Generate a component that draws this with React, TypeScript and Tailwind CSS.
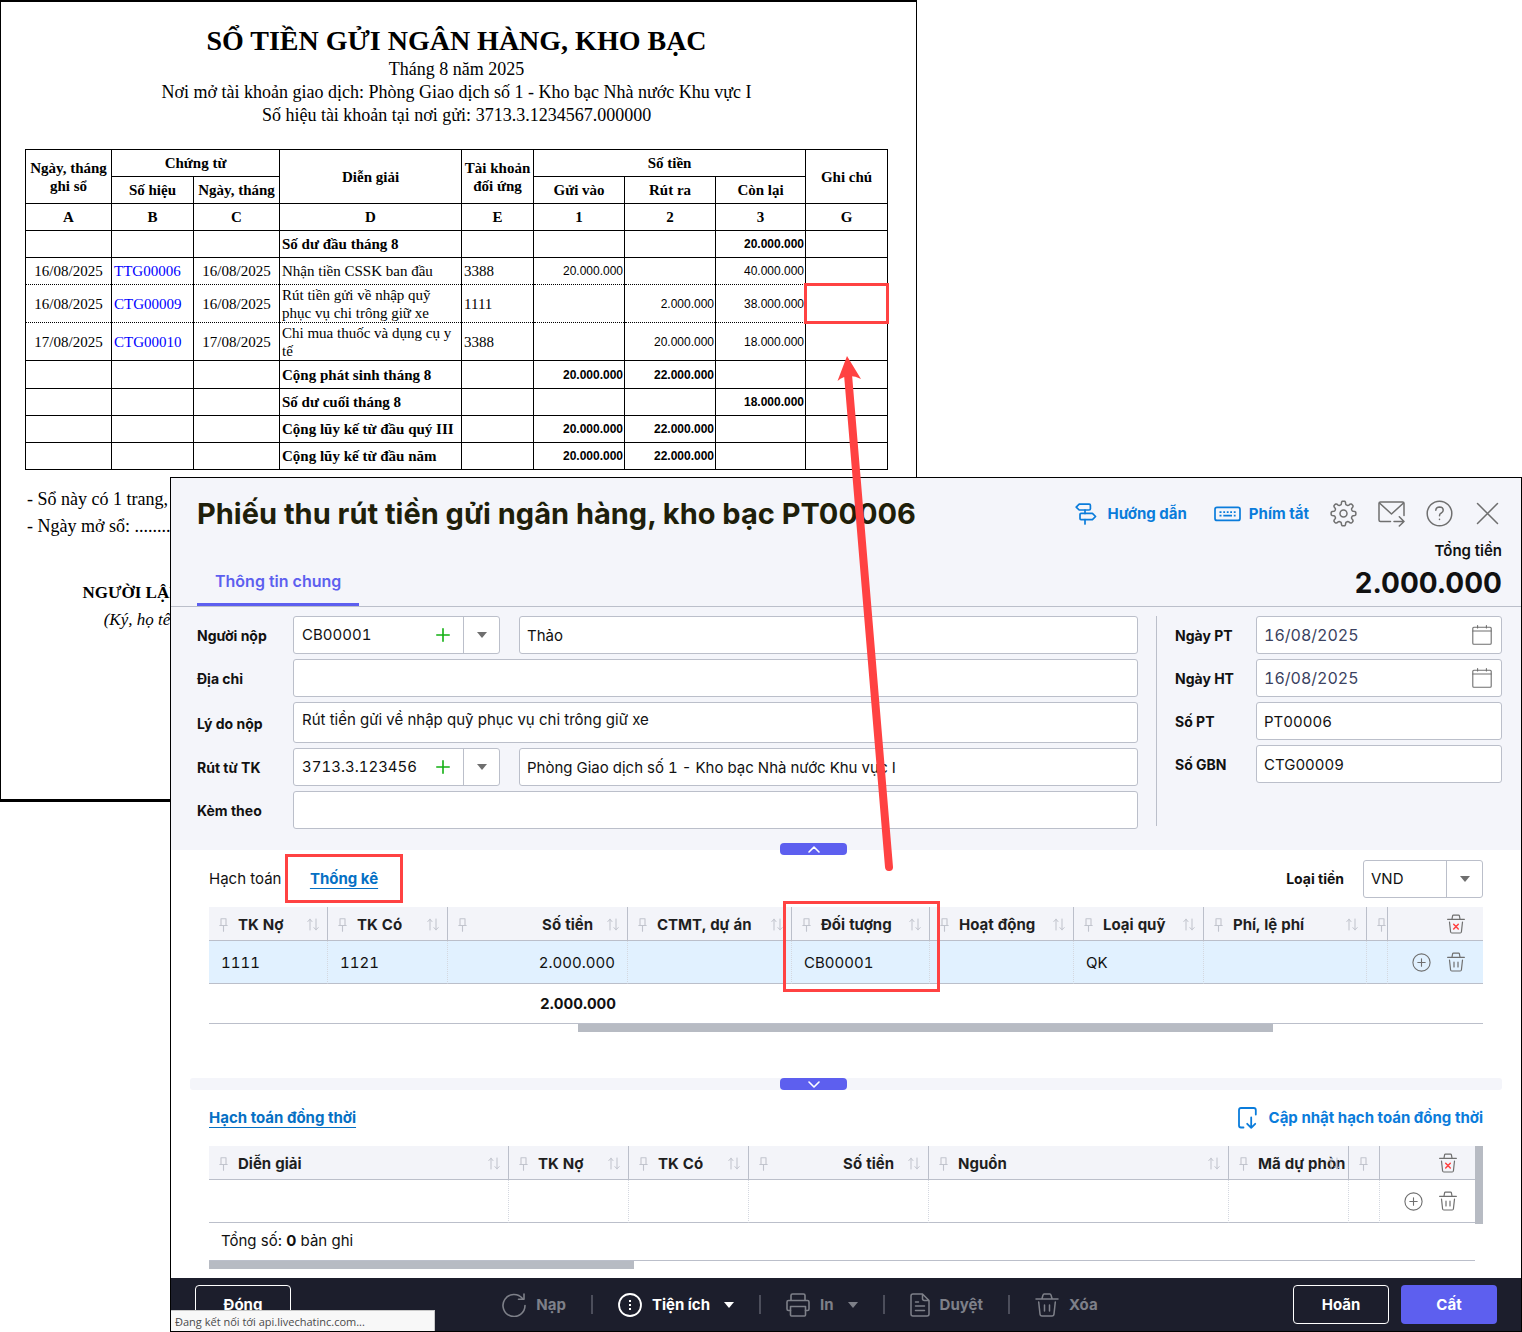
import type { ReactNode } from 'react';

interface LedgerRow {
  date?: string;
  code?: string;
  desc: string;
  account?: string;
  deposit?: string;
  withdraw?: string;
  balance?: string;
  bold?: boolean;
  dotted?: boolean;
  marked?: boolean;
  height: string;
}

interface GridColumn {
  label?: string;
  width: number;
  align?: 'right';
  sortable?: boolean;
  marked?: boolean;
  value?: string;
}

const ledgerRows: LedgerRow[] = [
  { desc: 'Số dư đầu tháng 8', balance: '20.000.000', bold: true, height: 'h-[27px]' },
  { date: '16/08/2025', code: 'TTG00006', desc: 'Nhận tiền CSSK ban đầu', account: '3388', deposit: '20.000.000', balance: '40.000.000', dotted: true, height: 'h-[27px]' },
  { date: '16/08/2025', code: 'CTG00009', desc: 'Rút tiền gửi về nhập quỹ phục vụ chi trông giữ xe', account: '1111', withdraw: '2.000.000', balance: '38.000.000', dotted: true, marked: true, height: 'h-[38px]' },
  { date: '17/08/2025', code: 'CTG00010', desc: 'Chi mua thuốc và dụng cụ y tế', account: '3388', withdraw: '20.000.000', balance: '18.000.000', height: 'h-[38px]' },
  { desc: 'Cộng phát sinh tháng 8', deposit: '20.000.000', withdraw: '22.000.000', bold: true, height: 'h-[28px]' },
  { desc: 'Số dư cuối tháng 8', balance: '18.000.000', bold: true, height: 'h-[27px]' },
  { desc: 'Cộng lũy kế từ đầu quý III', deposit: '20.000.000', withdraw: '22.000.000', bold: true, height: 'h-[27px]' },
  { desc: 'Cộng lũy kế từ đầu năm', deposit: '20.000.000', withdraw: '22.000.000', bold: true, height: 'h-[27px]' },
];

const ledgerWidths = [86, 82, 86, 182, 72, 91, 91, 90, 82];

const entryColumns: GridColumn[] = [
  { label: 'TK Nợ', width: 119, sortable: true, value: '1111' },
  { label: 'TK Có', width: 120, sortable: true, value: '1121' },
  { label: 'Số tiền', width: 180, align: 'right', sortable: true, value: '2.000.000' },
  { label: 'CTMT, dự án', width: 164, sortable: true },
  { label: 'Đối tượng', width: 138, sortable: true, marked: true, value: 'CB00001' },
  { label: 'Hoạt động', width: 144, sortable: true },
  { label: 'Loại quỹ', width: 130, sortable: true, value: 'QK' },
  { label: 'Phí, lệ phí', width: 163, sortable: true },
  { width: 21 },
];

const parallelColumns: GridColumn[] = [
  { label: 'Diễn giải', width: 300, sortable: true },
  { label: 'TK Nợ', width: 120, sortable: true },
  { label: 'TK Có', width: 120, sortable: true },
  { label: 'Số tiền', width: 180, align: 'right', sortable: true },
  { label: 'Nguồn', width: 300, sortable: true },
  { label: 'Mã dự phòn', width: 120, sortable: true },
  { width: 31 },
];

/* ---------- icons ---------- */

function Icon({ w, h, sw = 1, className = '', children }: { w: number; h: number; sw?: number; className?: string; children: ReactNode }) {
  return (
    <svg
      width={w}
      height={h}
      viewBox={`0 0 ${w} ${h}`}
      fill="none"
      stroke="currentColor"
      strokeWidth={sw}
      strokeLinecap="round"
      strokeLinejoin="round"
      className={`shrink-0 ${className}`}
      aria-hidden="true"
    >
      {children}
    </svg>
  );
}

const gearPath =
  Array.from({ length: 145 }, (_, i) => {
    const a = (i / 144) * Math.PI * 2;
    const r = 10.7 + 1.7 * Math.tanh(2.4 * Math.cos(8 * a));
    return `${i === 0 ? 'M' : 'L'}${(13.5 + r * Math.sin(a)).toFixed(2)} ${(13.5 - r * Math.cos(a)).toFixed(2)}`;
  }).join('') + 'Z';

const GearIcon = () => (
  <Icon w={27} h={27} sw={1.5}>
    <path d={gearPath} />
    <circle cx="13.5" cy="13.5" r="3.5" />
  </Icon>
);

const SignpostIcon = () => (
  <Icon w={22} h={22} sw={1.7}>
    <path d="M4.2 1.2H14.2Q15.4 1.2 15.4 2.4V5.8Q15.4 7 14.2 7H4.2L1.2 4.1Z" />
    <path d="M6 10.4H17.4L20.6 13.5L17.4 16.7H6Q5 16.7 5 15.6V11.5Q5 10.4 6 10.4Z" />
    <path d="M10 7V10.4M10 16.7V21" />
  </Icon>
);

const KeyboardIcon = () => (
  <Icon w={27} h={16} sw={1.7}>
    <rect x="1" y="1.4" width="25" height="13" rx="2" />
    <path strokeLinecap="butt" d="M5.5 6.2H7.5M9.3 6.2H11.1M12.8 6.2H14.6M16.2 6.2H18M19.8 6.2H21.6M5.5 9.6H7.5M9.3 9.6H18M19.8 9.6H21.6" />
  </Icon>
);

const MailIcon = () => (
  <Icon w={27} h={26} sw={1.5}>
    <path d="M12.5 20.5H2.5Q1 20.5 1 19V2.5Q1 1 2.5 1H24.5Q26 1 26 2.5V14.5" />
    <path d="M1.5 2L13.5 13L25.5 2M16 20.5H26M21.3 15.7L26 20.5L21.3 25" />
  </Icon>
);

const HelpIcon = () => (
  <Icon w={27} h={27} sw={1.5}>
    <circle cx="13.5" cy="13.5" r="12.3" />
    <path d="M9.8 10.3Q10.1 7 13.5 7Q17.2 7.1 17.2 10.2Q17.2 12.2 15 13.2Q13.5 14 13.5 15.8M13.5 19.3V19.6" />
  </Icon>
);

const CloseIcon = () => (
  <Icon w={23} h={23} sw={1.5}>
    <path d="M1.5 1.5L21.5 21.5M21.5 1.5L1.5 21.5" />
  </Icon>
);

const CalendarIcon = () => (
  <Icon w={21} h={21} sw={1.1}>
    <rect x="0.8" y="2.2" width="18.4" height="17" rx="1" />
    <path d="M0.8 6H19.2M5.6 0.6V3M14.4 0.6V3" />
  </Icon>
);

const PlusIcon = () => (
  <Icon w={14} h={14} sw={1.6} className="text-[#12b012]">
    <path d="M7 0.8V13.2M0.8 7H13.2" />
  </Icon>
);

const Caret = ({ className = 'text-[#6f6f6f]' }: { className?: string }) => (
  <svg width="10" height="6" viewBox="0 0 10 6" fill="currentColor" className={`shrink-0 ${className}`} aria-hidden="true">
    <path d="M0 0H10L5 6Z" />
  </svg>
);

const PinIcon = () => (
  <Icon w={10} h={14} sw={1.1} className="text-[#c1c4cd]">
    <path d="M2 7.3V0.8H7V7.3M0.8 7.5H8.2M4.5 7.5V13.2" />
  </Icon>
);

const SortIcon = () => (
  <Icon w={12} h={13} sw={1} className="text-[#bfc2cb]">
    <path d="M3 12V1.2M0.8 3.6L3 1.2L5 3.6M9 1V11.8M6.9 9.6L9 11.8L11.2 9.6" />
  </Icon>
);

const TrashIcon = ({ cross = false }: { cross?: boolean }) => (
  <Icon w={18} h={20} sw={1.2}>
    <path d="M0.6 5.3H17.4M5 5L5.6 1.8Q5.8 1.2 6.4 1.2H11.6Q12.2 1.2 12.4 1.8L13 5M2.5 8L3.6 18Q3.8 19 4.8 19H13.2Q14.2 19 14.4 18L15.5 8" />
    {cross ? <path stroke="#ff4242" strokeWidth="1.5" d="M6.7 10.2L11.3 15M11.3 10.2L6.7 15" /> : <path d="M7 10.2V15M11 10.2V15" />}
  </Icon>
);

const AddCircleIcon = () => (
  <Icon w={19} h={19} sw={1.1}>
    <circle cx="9.5" cy="9.5" r="8.6" />
    <path d="M9.5 5.8V13.2M5.8 9.5H13.2" />
  </Icon>
);

const UpdateIcon = () => (
  <Icon w={19} h={22} sw={1.8}>
    <path d="M17.8 7.5V3Q17.8 1 15.8 1H3Q1 1 1 3V18.5Q1 20.5 3 20.5H5.5" />
    <path d="M13.2 10.5V20.8M9.2 16.8L13.2 20.8L17.2 16.8" />
  </Icon>
);

const ReloadIcon = () => (
  <Icon w={24} h={24} sw={1.6}>
    <path d="M20.5 5.5A11 11 0 1 0 23 12.5" />
    <path d="M22 1V6.2H16.5" />
  </Icon>
);

const MoreIcon = () => (
  <Icon w={24} h={24} sw={1.8}>
    <circle cx="12" cy="12" r="11" />
    <path strokeWidth="2" strokeLinecap="square" d="M12 8V8.1M12 12V12.1M12 16V16.1" />
  </Icon>
);

const PrintIcon = () => (
  <Icon w={24} h={24} sw={1.6}>
    <path d="M5 7.5V2.5Q5 1 6.5 1H17.5Q19 1 19 2.5V7.5M4.5 17.5H2.5Q1 17.5 1 16V9Q1 7.5 2.5 7.5H21.5Q23 7.5 23 9V16Q23 17.5 21.5 17.5H19.5" />
    <path d="M4.5 13.5H19.5V22Q19.5 23 18.5 23H5.5Q4.5 23 4.5 22Z" />
  </Icon>
);

const DocIcon = () => (
  <Icon w={20} h={24} sw={1.5}>
    <path d="M12.5 1H3Q1 1 1 3V21Q1 23 3 23H17Q19 23 19 21V7.5ZM12.5 1V5.5Q12.5 7.5 14.5 7.5H19M5.5 9H8.5M5.5 13H14.5M5.5 17.5H14.5" />
  </Icon>
);

const BigTrashIcon = () => (
  <Icon w={24} h={24} sw={1.5}>
    <path d="M1 6H23M7 5.5L8 2Q8.2 1 9.2 1H14.8Q15.8 1 16 2L17 5.5M3.7 9L5 21Q5.2 23 7 23H17Q18.8 23 19 21L20.3 9M9.5 12V18M14.5 12V18" />
  </Icon>
);

/* ---------- ledger report ---------- */

function LedgerReport() {
  return (
    <section className="w-full max-w-[917px] h-[802px] border border-t-2 border-b-[3px] border-black bg-white pl-6 pr-7 font-['Liberation_Serif',serif] text-black">
      <header className="pt-[22px] text-center text-[18px] leading-[23px]">
        <h1 className="text-[28px] leading-[34px] font-bold">SỔ TIỀN GỬI NGÂN HÀNG, KHO BẠC</h1>
        <p>Tháng 8 năm 2025</p>
        <p>Nơi mở tài khoản giao dịch: Phòng Giao dịch số 1 - Kho bạc Nhà nước Khu vực I</p>
        <p>Số hiệu tài khoản tại nơi gửi: 3713.3.1234567.000000</p>
      </header>

      <table className="mt-[22px] w-full table-fixed border-collapse border border-black text-[15px] leading-[18px] [&_td]:border-x [&_td]:border-black [&_th]:border [&_th]:border-black">
        <colgroup>
          {ledgerWidths.map((w, i) => (
            <col key={i} style={{ width: w }} />
          ))}
        </colgroup>
        <thead>
          <tr className="h-[27px]">
            <th rowSpan={2}>Ngày, tháng ghi sổ</th>
            <th colSpan={2}>Chứng từ</th>
            <th rowSpan={2}>Diễn giải</th>
            <th rowSpan={2}>Tài khoản đối ứng</th>
            <th colSpan={3}>Số tiền</th>
            <th rowSpan={2}>Ghi chú</th>
          </tr>
          <tr className="h-[27px]">
            <th>Số hiệu</th>
            <th className="whitespace-nowrap">Ngày, tháng</th>
            <th>Gửi vào</th>
            <th>Rút ra</th>
            <th>Còn lại</th>
          </tr>
          <tr className="h-[27px]">
            {['A', 'B', 'C', 'D', 'E', '1', '2', '3', 'G'].map((c) => (
              <th key={c}>{c}</th>
            ))}
          </tr>
        </thead>
        <tbody>
          {ledgerRows.map((row) => {
            const num = "text-right pr-px font-['Liberation_Sans_Narrow','Liberation_Sans',sans-serif] text-[12px]";
            return (
              <tr
                key={row.desc}
                className={`${row.height} ${row.dotted ? '[&>td]:border-b [&>td]:[border-bottom-style:dotted]' : '[&>td]:border-b'} ${row.bold ? 'font-bold' : ''}`}
              >
                <td className="text-center">{row.date}</td>
                <td className="pl-0.5 text-[#0000ff]">{row.code && <a href="#ledger">{row.code}</a>}</td>
                <td className="text-center">{row.date}</td>
                <td className="pl-0.5">{row.desc}</td>
                <td className="pl-0.5">{row.account}</td>
                <td className={num}>{row.deposit}</td>
                <td className={num}>{row.withdraw}</td>
                <td className={num}>{row.balance}</td>
                <td className="relative">
                  {row.marked && <span className="absolute -inset-x-0.5 -inset-y-0.5 border-[3px] border-[#ff4242]" />}
                </td>
              </tr>
            );
          })}
        </tbody>
      </table>

      <div className="mt-4 pl-0.5 text-[18px] leading-[27px]">
        <p>- Sổ này có 1 trang,</p>
        <p>- Ngày mở sổ: ........</p>
      </div>
      <div className="mt-[39px] ml-[46px] w-[146px] text-center text-[17px] leading-[27px] whitespace-nowrap">
        <p className="font-bold">NGƯỜI LẬP SỔ</p>
        <p className="italic">(Ký, họ tên)</p>
      </div>
    </section>
  );
}

/* ---------- receipt form ---------- */

const fieldBox = 'h-[38px] w-full rounded-[3px] border border-[#bbbfca] bg-white px-[7px] tabular-nums outline-none';

function Field({ id, label, children, narrow = false }: { id: string; label: string; children: ReactNode; narrow?: boolean }) {
  return (
    <div className="flex items-center">
      <label htmlFor={id} className={`${narrow ? 'w-[81px]' : 'w-24'} shrink-0 pt-0.5 text-[14px] font-bold`}>
        {label}
      </label>
      <div className="flex min-w-0 flex-1 gap-[19px]">{children}</div>
    </div>
  );
}

function Combo({ id, value }: { id: string; value: string }) {
  return (
    <div className="flex h-[38px] w-[207px] shrink-0 items-stretch rounded-[3px] border border-[#bbbfca] bg-white">
      <input id={id} defaultValue={value} className="min-w-0 flex-1 pl-2 tabular-nums outline-none" />
      <button type="button" aria-label="Thêm" className="flex w-10 items-center justify-center">
        <PlusIcon />
      </button>
      <button type="button" aria-label="Chọn" className="flex w-9 items-center justify-center border-l border-[#bbbfca]">
        <Caret />
      </button>
    </div>
  );
}

function DateField({ id, value }: { id: string; value: string }) {
  return (
    <div className="flex h-[38px] w-full items-center rounded-[3px] border border-[#bbbfca] bg-white pr-2 pl-[7px] text-[#3b4260]">
      <input id={id} defaultValue={value} className="min-w-0 flex-1 text-[16px] tabular-nums outline-none" />
      <button type="button" aria-label="Chọn ngày" className="text-[#6f6f6f]">
        <CalendarIcon />
      </button>
    </div>
  );
}

function CollapseButton({ up = false }: { up?: boolean }) {
  return (
    <button
      type="button"
      aria-label={up ? 'Thu gọn' : 'Mở rộng'}
      className="ml-[45%] flex h-3 w-[67px] items-center justify-center rounded-[4px] bg-[#5d5fef] text-white"
    >
      <Icon w={12} h={7} sw={1.6}>
        <path d={up ? 'M1 6L6 1L11 6' : 'M1 1L6 6L11 1'} />
      </Icon>
    </button>
  );
}

function GridTable({ columns, actionWidth, selected = false, total }: { columns: GridColumn[]; actionWidth: number; selected?: boolean; total?: string }) {
  return (
    <table className="w-full table-fixed border-separate border-spacing-0 tabular-nums">
      <colgroup>
        {columns.map((c, i) => (
          <col key={i} style={{ width: c.width }} />
        ))}
        <col style={{ width: actionWidth }} />
      </colgroup>
      <thead>
        <tr className="h-[34px] bg-[#f3f4f9] text-[#1f1f1f]">
          {columns.map((c, i) => (
            <th key={i} className="relative border-r border-b border-[#bbbfca] p-0 pt-0.5 font-bold">
              <div className="flex items-center overflow-hidden pl-[10px]">
                <PinIcon />
                {c.label && <span className={`ml-[9px] flex-1 whitespace-nowrap ${c.align === 'right' ? 'pr-[34px] text-right' : 'text-left'}`}>{c.label}</span>}
              </div>
              {c.sortable && (
                <span className="absolute top-[11px] right-2">
                  <SortIcon />
                </span>
              )}
              {c.marked && <span className="absolute -top-1.5 -left-[9px] z-10 h-[91px] w-[157px] border-[3px] border-[#ff4242]" />}
            </th>
          ))}
          <th className="border-b border-[#bbbfca] p-0 pr-[18px] text-[#6f6f6f]">
            <button type="button" aria-label="Xóa tất cả" className="flex w-full justify-end">
              <TrashIcon cross />
            </button>
          </th>
        </tr>
      </thead>
      <tbody>
        <tr className={`h-[43px] ${selected ? 'bg-[#e1f1ff]' : 'bg-white'}`}>
          {columns.map((c, i) => (
            <td
              key={i}
              className={`border-r border-b border-[#d4d8e0] border-b-[#bbbfca] px-3 pt-px pb-0 [border-right-style:dotted] ${c.align === 'right' ? 'text-right' : ''}`}
            >
              {c.value}
            </td>
          ))}
          <td className="border-b border-[#bbbfca] p-0 pr-[18px] text-[#6f6f6f]">
            <div className="flex items-center justify-end gap-4">
              <button type="button" aria-label="Thêm dòng">
                <AddCircleIcon />
              </button>
              <button type="button" aria-label="Xóa dòng">
                <TrashIcon />
              </button>
            </div>
          </td>
        </tr>
      </tbody>
      {total && (
        <tfoot>
          <tr className="h-10 font-bold">
            <td colSpan={3} className="border-b border-[#bbbfca] pr-3 text-right">
              {total}
            </td>
            <td colSpan={columns.length - 2} className="border-b border-[#bbbfca]" />
          </tr>
        </tfoot>
      )}
    </table>
  );
}

function BarItem({ icon, label, active = false, caret = false }: { icon: ReactNode; label: string; active?: boolean; caret?: boolean }) {
  return (
    <button type="button" className={`flex items-center gap-[10px] font-bold ${active ? 'text-white' : 'text-[#7e8089]'}`}>
      {icon}
      {label}
      {caret && <Caret className={`ml-1 ${active ? 'text-white' : 'text-[#7e8089]'}`} />}
    </button>
  );
}

const Divider = () => <span className="h-[19px] w-0.5 bg-[#4c4e5b]" />;

function ReceiptDialog() {
  return (
    <section className="relative -mt-[325px] ml-[170px] border border-black bg-white font-['Inter',sans-serif] text-[15px] leading-5 text-[#111111]">
      <div className="flow-root bg-[#f4f5fa]">
        <header className="border-b border-[#bbbfca] pr-[19px] pl-[26px]">
          <div className="flex h-[71px] items-center justify-between">
            <h2 className="text-[29px] leading-9 font-bold text-[#1f1f0a]">Phiếu thu rút tiền gửi ngân hàng, kho bạc PT00006</h2>
            <div className="flex items-center gap-[21px] text-[#6f6f6f]">
              <a href="#guide" className="flex items-center gap-[11px] font-bold text-[#0a7cdb]">
                <SignpostIcon />
                Hướng dẫn
              </a>
              <a href="#shortcuts" className="ml-1.5 flex items-center gap-2 font-bold text-[#0a7cdb]">
                <KeyboardIcon />
                Phím tắt
              </a>
              <button type="button" aria-label="Thiết lập"><GearIcon /></button>
              <button type="button" aria-label="Gửi thư"><MailIcon /></button>
              <button type="button" aria-label="Trợ giúp"><HelpIcon /></button>
              <button type="button" aria-label="Đóng cửa sổ" className="pr-[3px] pl-0.5"><CloseIcon /></button>
            </div>
          </div>
          <div className="flex h-[57px] items-end justify-between">
            <button type="button" className="h-[35px] border-b-[3px] border-[#5d5fef] px-[18px] pb-3 text-[16px] leading-5 font-semibold text-[#5d5fef]">
              Thông tin chung
            </button>
            <div className="h-full -translate-y-2 text-right">
              <p className="font-semibold">Tổng tiền</p>
              <p className="mt-1 text-[28px] leading-9 font-bold">2.000.000</p>
            </div>
          </div>
        </header>

        <form className="flex gap-[18px] pt-[9px] pr-[19px] pl-[26px]">
          <div className="flex min-w-0 flex-1 flex-col gap-[5px]">
            <Field id="payer" label="Người nộp">
              <Combo id="payer" value="CB00001" />
              <input aria-label="Tên người nộp" defaultValue="Thảo" className={fieldBox} />
            </Field>
            <Field id="address" label="Địa chỉ">
              <input id="address" className={fieldBox} />
            </Field>
            <Field id="reason" label="Lý do nộp">
              <textarea
                id="reason"
                defaultValue="Rút tiền gửi về nhập quỹ phục vụ chi trông giữ xe"
                className="h-[41px] w-full resize-none rounded-[3px] border border-[#bbbfca] bg-white px-2 py-[7px] outline-none"
              />
            </Field>
            <Field id="account" label="Rút từ TK">
              <Combo id="account" value="3713.3.123456" />
              <input aria-label="Tên tài khoản" defaultValue="Phòng Giao dịch số 1 - Kho bạc Nhà nước Khu vực I" className={fieldBox} />
            </Field>
            <Field id="attached" label="Kèm theo">
              <input id="attached" className={fieldBox} />
            </Field>
          </div>
          <div className="mb-[3px] w-px bg-[#bbbfca]" />
          <div className="flex w-[327px] flex-col gap-[5px]">
            <Field id="datePT" label="Ngày PT" narrow>
              <DateField id="datePT" value="16/08/2025" />
            </Field>
            <Field id="dateHT" label="Ngày HT" narrow>
              <DateField id="dateHT" value="16/08/2025" />
            </Field>
            <Field id="noPT" label="Số PT" narrow>
              <input id="noPT" defaultValue="PT00006" className={fieldBox} />
            </Field>
            <Field id="noGBN" label="Số GBN" narrow>
              <input id="noGBN" defaultValue="CTG00009" className={fieldBox} />
            </Field>
          </div>
        </form>

        <div className="mx-[19px] -mb-[5px] pt-[14px]">
          <CollapseButton up />
        </div>
      </div>

      <div className="px-[38px]">
        <div className="flex h-[57px] items-center">
          <a href="#entries" className="w-[76px]">Hạch toán</a>
          <a
            href="#stats"
            className="flex h-[49px] w-[118px] items-center justify-center border-[3px] border-[#ff4242] font-bold text-[#0570c4] underline underline-offset-4"
          >
            Thống kê
          </a>
          <label htmlFor="currency" className="mr-[19px] ml-auto text-[14px] font-bold">
            Loại tiền
          </label>
          <div className="relative">
            <select id="currency" defaultValue="VND" className="h-[38px] w-[120px] appearance-none rounded-[3px] border border-[#bbbfca] bg-white px-[7px] outline-none">
              <option>VND</option>
            </select>
            <span className="pointer-events-none absolute inset-y-0 right-0 flex w-[37px] items-center justify-center border-l border-[#bbbfca]">
              <Caret />
            </span>
          </div>
        </div>

        <GridTable columns={entryColumns} actionWidth={95} selected total="2.000.000" />
        <div className="h-2">
          <div className="ml-[29%] h-full w-[695px] bg-[#b7bbc3]" />
        </div>
      </div>

      <div className="mx-[19px] mt-[46px] rounded-[3px] bg-[#f4f5fa]">
        <CollapseButton />
      </div>

      <div className="px-[38px]">
        <div className="flex h-14 items-center justify-between font-bold">
          <a href="#parallel" className="text-[#0570c4] underline underline-offset-4">
            Hạch toán đồng thời
          </a>
          <a href="#update" className="flex items-center gap-3 text-[#0a7cdb]">
            <UpdateIcon />
            Cập nhật hạch toán đồng thời
          </a>
        </div>
        <div className="flex">
          <div className="min-w-0 flex-1">
            <GridTable columns={parallelColumns} actionWidth={95} />
            <p className="flex h-[38px] items-center border-b border-[#bbbfca] pb-0.5 pl-3 whitespace-pre">
              Tổng số: <b className="font-bold">0</b> bản ghi
            </p>
          </div>
          <div className="h-[78px] w-2 bg-[#b7bbc3]" />
        </div>
        <div className="h-2 w-1/3 bg-[#b7bbc3]" />
      </div>

      <footer className="relative mt-[9px] flex h-[53px] items-center bg-[#1c1e2c] pr-6 pl-6 font-bold text-white">
        <button type="button" className="h-[39px] w-24 rounded-[4px] border border-white">Đóng</button>
        <div className="mx-auto flex items-center gap-[25px] pl-4">
          <BarItem icon={<ReloadIcon />} label="Nạp" />
          <Divider />
          <BarItem icon={<MoreIcon />} label="Tiện ích" active caret />
          <Divider />
          <BarItem icon={<PrintIcon />} label="In" caret />
          <Divider />
          <BarItem icon={<DocIcon />} label="Duyệt" />
          <Divider />
          <BarItem icon={<BigTrashIcon />} label="Xóa" />
        </div>
        <button type="button" className="h-[39px] w-24 rounded-[4px] border border-white">Hoãn</button>
        <button type="button" className="ml-3 h-[39px] w-24 rounded-[4px] bg-[#5d5fef]">Cất</button>
        <div className="absolute bottom-0 left-0 h-[21px] w-[264px] border-t border-r border-[#c9c9c9] bg-[#f8f8f8] pl-1 font-['Open_Sans',sans-serif] text-[11px] leading-[22px] font-normal text-[#4a4a4a]">
          Đang kết nối tới api.livechatinc.com...
        </div>
      </footer>
    </section>
  );
}

export default function App() {
  return (
    <main className="relative bg-white">
      <LedgerReport />
      <ReceiptDialog />
      {/* annotation arrow from the "Đối tượng" column up to the "Ghi chú" cell */}
      <svg className="pointer-events-none absolute top-[350px] left-[830px]" width="70" height="530" viewBox="0 0 70 530" aria-hidden="true">
        <path d="M59 517L17.8 22" stroke="#ff4242" strokeWidth="8" strokeLinecap="round" />
        <path d="M17 6L31 29Q18 22 7.5 31Z" fill="#ff4242" />
      </svg>
    </main>
  );
}
